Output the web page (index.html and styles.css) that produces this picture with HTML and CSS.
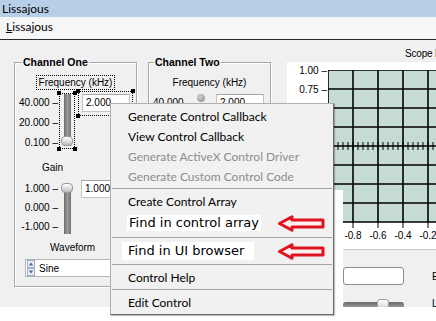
FILE: index.html
```html
<!DOCTYPE html>
<html lang="en">
<head>
  <meta charset="UTF-8">
  <title>Lissajous</title>
  <link rel="stylesheet" href="styles.css">
</head>
<body>
  <div class="window">
    <div class="titlebar">Lissajous</div>
    <div class="menubar"><span><u>L</u>issajous</span></div>

    <div class="panel">

      <!-- Channel One -->
      <div class="group">
        <div class="group-title">Channel One</div>
        <div class="ctl-label selected">Frequency (kHz)</div>
        <div class="slider-row freq">
          <div class="scale">
            <span>40.000 –</span>
            <span>20.000 –</span>
            <span>0.100 –</span>
          </div>
          <div class="vslider selected">
            <div class="track bottom"><div class="thumb"></div></div>
            <i class="handle tl"></i><i class="handle tr"></i>
            <i class="handle bl"></i><i class="handle br"></i>
          </div>
          <div class="numeric-sel selected">
            <div class="numeric">2.000</div>
            <i class="handle tl"></i><i class="handle tr"></i>
            <i class="handle bl"></i><i class="handle br"></i>
          </div>
        </div>

        <div class="small-label gain">Gain</div>
        <div class="slider-row gain-row">
          <div class="scale">
            <span>1.000 –</span>
            <span>0.000 –</span>
            <span>-1.000 –</span>
          </div>
          <div class="vslider">
            <div class="track"><div class="thumb"></div></div>
          </div>
          <div class="numeric">1.000</div>
        </div>

        <div class="small-label waveform">Waveform</div>
        <div class="ring">
          <div class="spin">
            <svg width="8" height="16" viewBox="0 0 8 16">
              <rect x="0.5" y="0.5" width="7" height="7" fill="#e8eef6" stroke="#9fb1c8"/>
              <rect x="0.5" y="8.5" width="7" height="7" fill="#e8eef6" stroke="#9fb1c8"/>
              <path d="M4 2.5 L6.2 5.5 H1.8 Z" fill="#4d6a92"/>
              <path d="M4 13.5 L6.2 10.5 H1.8 Z" fill="#4d6a92"/>
            </svg>
          </div>
          <span>Sine</span>
        </div>
      </div>

      <!-- Channel Two -->
      <div class="group two">
        <div class="group-title">Channel Two</div>
        <div class="ctl-label">Frequency (kHz)</div>
        <div class="slider-row freq">
          <div class="scale">
            <span>40.000 –</span>
          </div>
          <div class="vslider">
            <div class="track"><div class="thumb knob"></div></div>
          </div>
          <div class="numeric-sel">
            <div class="numeric">2.000</div>
          </div>
        </div>
      </div>

      <!-- Scope -->
      <div class="scope">
        <div class="scope-title">Scope Display</div>
        <div class="graph">
          <svg width="300" height="187" viewBox="0 0 300 187">
            <defs>
              <pattern id="grid" x="40" y="7" width="25" height="19" patternUnits="userSpaceOnUse">
                <path d="M0 1 H25 M1 0 V19" stroke="#000" stroke-width="1.6" fill="none"/>
              </pattern>
              <pattern id="ticks" x="40" y="80" width="5" height="8" patternUnits="userSpaceOnUse">
                <path d="M1 0 V8" stroke="#000" stroke-width="1"/>
              </pattern>
            </defs>
            <rect x="41" y="8" width="250" height="152" fill="#c6dbd2"/>
            <rect x="41" y="8" width="252" height="153" fill="url(#grid)"/>
            <rect x="41" y="80" width="250" height="8" fill="url(#ticks)"/>
            <g class="ytext">
              <text x="40" y="11.5">1.00 –</text>
              <text x="40" y="30.5">0.75 –</text>
            </g>
            <path d="M66 160 V166 M91 160 V166 M116 160 V166 M141 160 V166 M166 160 V166" stroke="#000" stroke-width="1"/>
            <g class="xtext">
              <text x="66" y="177">-0.8</text>
              <text x="91" y="177">-0.6</text>
              <text x="116" y="177">-0.4</text>
              <text x="141" y="177">-0.2</text>
            </g>
          </svg>
        </div>
        <div class="ctl-row">
          <div class="numeric wide"></div>
          <span class="side-label">E</span>
        </div>
        <div class="ctl-row hs-row">
          <div class="hslider"><div class="hthumb"></div></div>
          <span class="side-label">L</span>
        </div>
      </div>
    </div>

    <div class="white-strip"></div>

    <!-- Context menu -->
    <div class="ctx-menu">
      <div class="item">Generate Control Callback</div>
      <div class="item">View Control Callback</div>
      <div class="item disabled">Generate ActiveX Control Driver</div>
      <div class="item disabled">Generate Custom Control Code</div>
      <div class="sep"></div>
      <div class="item">Create Control Array</div>
      <div class="item big array">
        <span class="hl">Find in control array</span>
        <svg class="arrow" width="48" height="17" viewBox="0 0 48 17">
          <path d="M2.5 8.5 L15 1.8 V5 H46 V12 H15 V15.2 Z" fill="#fff0f0" stroke="#de1420" stroke-width="3" stroke-linejoin="round"/>
        </svg>
      </div>
      <div class="sep"></div>
      <div class="item big browser">
        <span class="hl">Find in UI browser</span>
        <svg class="arrow" width="48" height="17" viewBox="0 0 48 17">
          <path d="M2.5 8.5 L15 1.8 V5 H46 V12 H15 V15.2 Z" fill="#fff0f0" stroke="#de1420" stroke-width="3" stroke-linejoin="round"/>
        </svg>
      </div>
      <div class="sep"></div>
      <div class="item">Control Help</div>
      <div class="sep"></div>
      <div class="item">Edit Control</div>
    </div>
  </div>
</body>
</html>
```

FILE: styles.css
```css
body {
  margin: 0;
  background: #fff;
  font-family: "Liberation Sans", Arial, sans-serif;
  font-size: 10px;
  color: #000;
}

.window {
  position: relative;
  width: 436px;
  height: 321px;
  overflow: hidden;
}

.titlebar {
  height: 17px;
  line-height: 17px;
  padding-left: 2px;
  background: #b7cee7;
  font-family: Lato, sans-serif;
  font-size: 12px;
}

.menubar {
  height: 22px;
  line-height: 20px;
  padding-left: 6px;
  background: #f5f6f7;
  border-bottom: 1px solid #2a2a2a;
  font-family: Lato, sans-serif;
  font-size: 12px;
}

.panel {
  display: flex;
  align-items: flex-start;
  height: 267px;
  background: #f0f0f0;
  overflow: hidden;
}

/* group boxes */
.group {
  box-sizing: border-box;
  flex: none;
  width: 123px;
  height: 225px;
  margin: 22px 0 0 14px;
  border: 1px solid #a8a8a8;
  box-shadow: 1px 1px 0 #fff, inset 1px 1px 0 #fff;
}

.group.two {
  margin-left: 11px;
}

.group-title {
  display: table;
  margin: -7px 0 0 7px;
  padding: 0 1px;
  line-height: 13px;
  background: #f0f0f0;
  font-weight: bold;
  font-size: 10.5px;
}

.group.two .group-title {
  margin-left: 5px;
}

.ctl-label {
  display: table;
  margin: 6px auto 0;
  padding: 0 2px;
  line-height: 13px;
  border: 1px solid transparent;
}

.selected {
  position: relative;
  border: 1px dotted #000 !important;
}

.handle {
  position: absolute;
  width: 4px;
  height: 4px;
  background: #000;
}
.handle.tl { left: -3px; top: -3px; }
.handle.tr { right: -3px; top: -3px; }
.handle.bl { left: -3px; bottom: -3px; }
.handle.br { right: -3px; bottom: -3px; }

/* slider rows */
.slider-row {
  display: flex;
  align-items: flex-start;
}

.slider-row.freq {
  height: 60px;
  margin-top: 1px;
}

.slider-row.gain-row {
  height: 54px;
  margin-top: 6px;
}

.scale {
  box-sizing: border-box;
  display: flex;
  flex-direction: column;
  justify-content: space-between;
  align-items: flex-end;
  width: 44px;
  height: 100%;
  padding-right: 1px;
  line-height: 12px;
}

.freq .scale {
  padding-top: 6px;
  padding-bottom: 2px;
}

.gain-row .scale {
  padding-top: 3px;
  padding-bottom: 1px;
}

.vslider {
  box-sizing: border-box;
  width: 16px;
  height: 56px;
  margin-top: 2px;
  border: 1px solid transparent;
}

.track {
  display: flex;
  flex-direction: column;
  align-items: center;
  width: 7px;
  height: 52px;
  margin: 0 auto;
  background: linear-gradient(to right, #6a6a6a, #9c9c9c 50%, #6f6f6f);
}

.track.bottom {
  justify-content: flex-end;
}

.gain-row .vslider {
  margin-top: 2px;
}

.gain-row .track {
  height: 48px;
  margin-top: 3px;
}

.thumb {
  flex: none;
  width: 12px;
  height: 10px;
  border-radius: 4px;
  background: linear-gradient(#fff, #d9d9d9 60%, #b9b9b9);
  border: 1px solid #9a9a9a;
  box-sizing: border-box;
}

.gain-row .thumb {
  margin-top: -3px;
}

.thumb.knob {
  width: 8px;
  height: 8px;
  margin-top: 0;
  border-radius: 50%;
  background: radial-gradient(circle at 40% 35%, #d0d0d0, #8a8a8a);
  border: none;
}

.group.two .track {
  background: none;
}

.numeric-sel {
  box-sizing: border-box;
  width: 55px;
  height: 25px;
  margin-left: 3px;
  border: 1px solid transparent;
}

.numeric {
  box-sizing: border-box;
  width: 48px;
  height: 18px;
  padding-left: 3px;
  line-height: 16px;
  background: #fff;
  border: 1px solid #c4c4c4;
  border-top-color: #a6a6a6;
}

.numeric-sel .numeric {
  margin: 2px 0 0 3px;
}

.gain-row .numeric {
  margin-left: 6px;
}

.small-label {
  line-height: 12px;
}

.small-label.gain {
  margin: 11px 0 0 27px;
}

.small-label.waveform {
  margin: 8px 0 0 35px;
}

.ring {
  box-sizing: border-box;
  display: flex;
  align-items: center;
  width: 100px;
  height: 18px;
  margin: 5px 0 0 10px;
  background: #fff;
  border: 1px solid #b4b4b4;
}

.spin {
  display: flex;
  padding-left: 1px;
}

.ring span {
  padding-left: 4px;
}

/* scope */
.scope {
  flex: none;
  width: 300px;
  margin: 8px 0 0 16px;
}

.scope-title {
  padding-left: 118px;
  line-height: 12px;
  letter-spacing: -0.2px;
}

.graph {
  height: 187px;
  margin-top: 2px;
  background: #fff;
  border-bottom: 1px solid #c8c8c8;
}

.graph svg {
  display: block;
  font-family: "Liberation Sans", Arial, sans-serif;
  font-size: 10px;
}

.ytext text {
  text-anchor: end;
}

.xtext text {
  text-anchor: middle;
}

.ctl-row {
  display: flex;
  align-items: center;
  margin: 17px 0 0 56px;
}

.numeric.wide {
  width: 61px;
  border: 1px solid #8e8e8e;
  border-radius: 3px;
}

.side-label {
  margin-left: 28px;
}

.hs-row {
  margin-top: 13px;
}

.hslider {
  display: flex;
  justify-content: center;
  width: 61px;
  height: 6px;
  margin-top: 3px;
  border-radius: 3px;
  background: linear-gradient(#6a6a6a, #9c9c9c);
}

.hthumb {
  width: 12px;
  height: 11px;
  margin-top: -3px;
  margin-left: 18px;
  border-radius: 3px;
  background: linear-gradient(#fff, #d0d0d0);
  border: 1px solid #a0a0a0;
  box-sizing: border-box;
}

/* annotation overlays */
.white-strip {
  position: absolute;
  left: 334px;
  top: 190px;
  width: 9px;
  bottom: 0;
  background: #fff;
}

.ctx-menu {
  position: absolute;
  left: 110px;
  top: 103px;
  box-sizing: border-box;
  width: 224px;
  height: 212px;
  padding: 2px 0;
  background: #f1f1f1;
  border: 1px solid #b0b0b0;
  border-right-color: #6b6b6b;
  border-bottom-color: #6b6b6b;
  box-shadow: 1px 1px 1px rgba(0, 0, 0, 0.25);
  font-family: Lato, sans-serif;
  font-size: 12px;
}

.item {
  display: flex;
  align-items: center;
  height: 20px;
  padding-left: 17px;
}

.item.disabled {
  color: #8d8d8d;
}

.sep {
  height: 1px;
  margin: 2px 1px;
  background: #a3a3a3;
}

.item.big {
  padding-left: 16px;
  font-family: "DejaVu Sans", sans-serif;
  font-size: 13px;
}

.item.array {
  height: 24px;
}

.item.browser {
  height: 22px;
  padding-left: 11px;
}

.hl {
  background: #fff;
  padding: 0 2px;
  line-height: 16px;
}

.browser .hl {
  padding: 1px 10px 1px 6px;
}

.arrow {
  margin-left: auto;
  margin-right: 8px;
}
```
